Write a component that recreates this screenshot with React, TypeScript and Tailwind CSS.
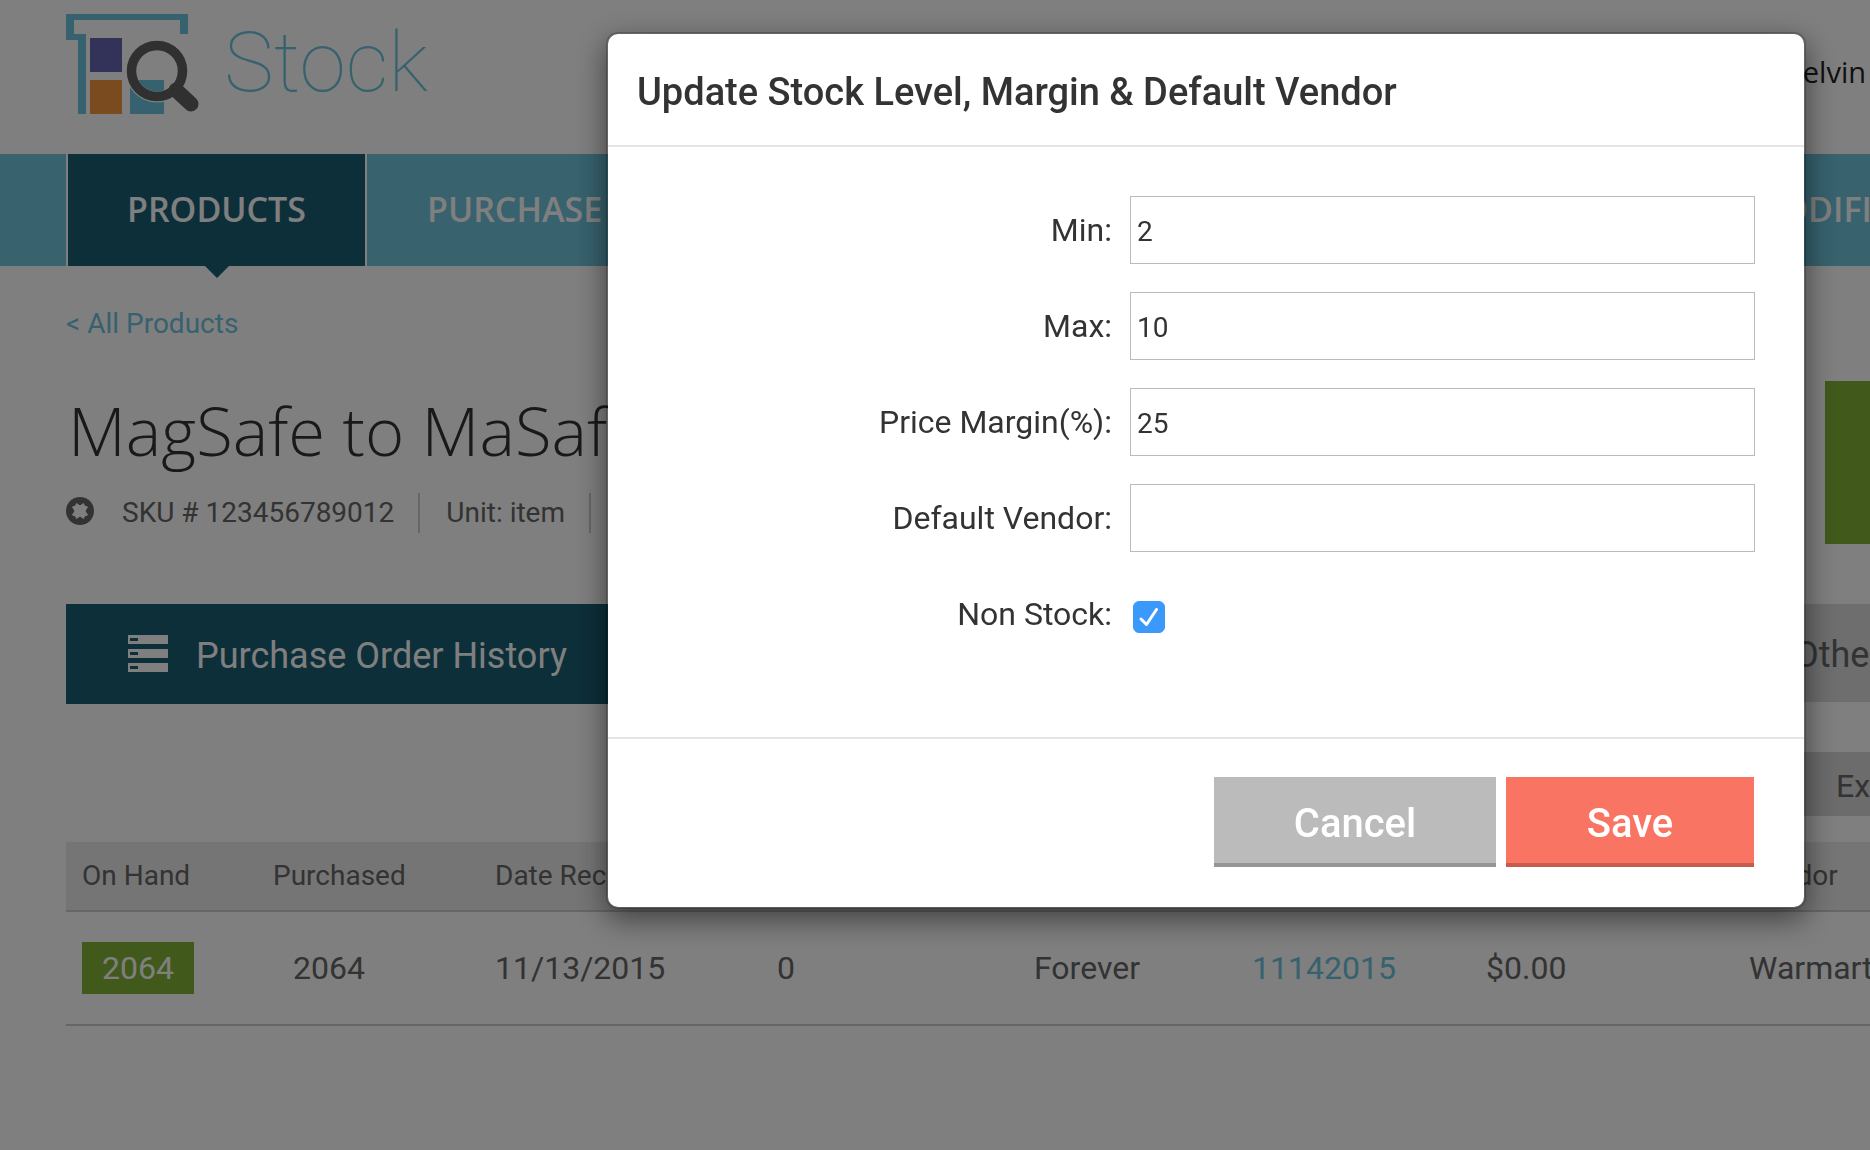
import type { ReactNode } from "react";

function Logo() {
  return (
    <svg width="134" height="104" viewBox="66 12 134 104" aria-hidden="true">
      <path d="M66 14H188V34H180V20H74V34H86V114H78V40H66Z" fill="#6dc3dc" />
      <rect x="90" y="38" width="32" height="34" fill="#6666b4" />
      <rect x="90" y="80" width="32" height="34" fill="#f5963c" />
      <rect x="130" y="80" width="34" height="34" fill="#6dc3dc" />
      <circle cx="157" cy="71" r="26" fill="none" stroke="#fff" strokeWidth="11" />
      <path d="M141 80H164V88Q158 91 151 88Q145 86 141 80Z" fill="#6dc3dc" />
      <path d="M176 90L191 104" stroke="#606060" strokeWidth="15" strokeLinecap="round" />
      <circle cx="157" cy="71" r="25.5" fill="none" stroke="#606060" strokeWidth="9.5" />
    </svg>
  );
}

function StatusIcon() {
  return (
    <svg width="28" height="28" viewBox="0 0 28 28" aria-hidden="true" className="mb-1 shrink-0">
      <circle cx="14" cy="14" r="14" fill="#666" />
      <path
        d="M10.500 6.500L14 9L17.500 6.500L18.500 9L21.500 10L19 14L21.500 18L18.500 19L17.500 21.500L14 19L10.500 21.500L9.500 19L6.500 18L9 14L6.500 10L9.500 9Z"
        fill="#fff"
        stroke="#fff"
        strokeWidth="1"
        strokeLinejoin="round"
      />
    </svg>
  );
}

function ListIcon() {
  return (
    <svg width="40" height="38" viewBox="0 0 40 38" aria-hidden="true" className="mb-1 shrink-0">
      {[0, 14, 28].map((y) => (
        <g key={y}>
          <rect x="0" y={y} width="40" height="9" fill="#fff" />
          <rect x="2" y={y + 3} width="8" height="3" fill="#1a5e72" />
        </g>
      ))}
    </svg>
  );
}

function Field({ id, label, value }: { id: string; label: string; value: string }) {
  return (
    <Row id={id} label={label}>
      <input
        id={id}
        type="text"
        defaultValue={value}
        className="h-[68px] w-full border border-[#bbb] bg-white px-[6px] pt-[2px] text-[28px] text-[#333] outline-none"
      />
    </Row>
  );
}

function Row({ id, label, children }: { id: string; label: string; children: ReactNode }) {
  return (
    <div className="grid h-[68px] grid-cols-[504px_1fr] items-center gap-[18px]">
      <label htmlFor={id} className="text-right text-[32px] leading-10">
        {label}
      </label>
      {children}
    </div>
  );
}

function Modal() {
  return (
    <div className="fixed inset-0 flex items-start bg-black/50 pt-8 pr-16 pl-[606px]">
      <form
        role="dialog"
        aria-labelledby="dialog-title"
        className="flex-1 rounded-xl border-2 border-black/20 bg-white bg-clip-padding shadow-[0_10px_30px_rgba(0,0,0,0.5)]"
        onSubmit={(e) => e.preventDefault()}
      >
        <h2 id="dialog-title" className="border-b-2 border-[#e5e5e5] px-[29px] pt-[33px] pb-7 text-[38px] leading-[50px] font-medium">
          Update Stock Level, Margin &amp; Default Vendor
        </h2>
        <div className="flex flex-col gap-7 border-b-2 border-[#e5e5e5] pt-[49px] pr-[49px] pb-[89px]">
          <Field id="min" label="Min:" value="2" />
          <Field id="max" label="Max:" value="10" />
          <Field id="margin" label="Price Margin(%):" value="25" />
          <Field id="vendor" label="Default Vendor:" value="" />
          <Row id="non-stock" label="Non Stock:">
            <span className="relative mt-[6px] ml-[3px] size-8">
              <input
                id="non-stock"
                type="checkbox"
                defaultChecked
                className="peer block size-8 appearance-none rounded-md border border-[#bbb] checked:border-[#3b99fc] checked:bg-[#3b99fc]"
              />
              <svg
                viewBox="0 0 32 32"
                aria-hidden="true"
                className="pointer-events-none absolute inset-0 hidden size-8 peer-checked:block"
              >
                <path d="M8 18L13.5 23.500L23.500 8.500" fill="none" stroke="#fff" strokeWidth="3" strokeLinecap="round" strokeLinejoin="round" />
              </svg>
            </span>
          </Row>
        </div>
        <div className="flex justify-end gap-[10px] pt-[38px] pr-[50px] pb-10 text-[40px] font-medium text-white">
          <button type="button" className="h-[90px] w-[282px] border-b-4 border-[#969696] bg-[#bbb] pt-2">
            Cancel
          </button>
          <button type="submit" className="h-[90px] w-[248px] border-b-4 border-[#c65c4e] bg-[#f97462] pt-2">
            Save
          </button>
        </div>
      </form>
    </div>
  );
}

export default function App() {
  return (
    <div className="min-h-screen overflow-hidden bg-white font-[Roboto,sans-serif] text-[#333]">
      <header className="flex h-[154px] items-start justify-between pl-[66px]">
        <div className="flex pt-3">
          <Logo />
          <span className="ml-6 text-[84px] leading-[102px] font-thin text-[#6dc3dc]">Stock</span>
        </div>
        <span className="pt-[52px] pr-1 font-['Open_Sans',sans-serif] text-[29px] leading-10 text-[#222]">Kelvin</span>
      </header>

      <nav className="flex h-28 bg-[#6ec4dc] pl-[66px] font-['Open_Sans',sans-serif] text-[34px] font-semibold text-white">
        <a href="#products" className="relative flex w-[301px] items-center justify-center border-x-2 border-white bg-[#1a5e72] pb-[2px]">
          PRODUCTS
          <svg width="24" height="12" viewBox="0 0 24 12" aria-hidden="true" className="absolute top-full left-1/2 -translate-x-1/2">
            <path d="M0 0H24L12 12Z" fill="#1a5e72" />
          </svg>
        </a>
        <a href="#purchase" className="flex items-center pb-[2px] pl-[60px]">
          PURCHASE
        </a>
        <a href="#modifiers" className="ml-auto flex w-[120px] items-center overflow-hidden pb-[2px]">
          MODIFIERS
        </a>
      </nav>

      <main className="pl-[66px]">
        <a href="#all" className="mt-[38px] block w-fit text-[28px] leading-10 text-[#6dc3dc]">
          &lt; All Products
        </a>
        <div className="mt-[37px] flex h-[163px] justify-between">
          <div className="flex flex-col">
            <h1 className="pt-1 pl-[2px] font-['Open_Sans',sans-serif] text-[67px] leading-[90px] font-light whitespace-nowrap">
              MagSafe to MaSafe
            </h1>
            <div className="mt-[18px] flex h-10 items-center text-[28px] text-[#666]">
              <StatusIcon />
              <span className="ml-7">SKU # 123456789012</span>
              <span className="ml-6 h-10 border-l-2 border-[#ccc]" />
              <span className="ml-[26px]">Unit: item</span>
              <span className="ml-6 h-10 border-l-2 border-[#ccc]" />
            </div>
          </div>
          <button type="button" aria-label="Add" className="w-[45px] bg-[#83b337]" />
        </div>

        <div className="mt-[60px] flex h-[100px] items-start justify-between text-[36px]">
          <button type="button" className="flex h-[100px] w-[560px] items-center bg-[#1a5e72] pt-1 pl-[62px] text-white">
            <ListIcon />
            <span className="ml-7">Purchase Order History</span>
          </button>
          <button type="button" className="h-[98px] w-[120px] overflow-hidden bg-[#dcdcdc] pt-1 pl-[44px] text-left text-[#666]">
            Other
          </button>
        </div>

        <div className="mt-12 flex justify-end">
          <button type="button" className="h-16 w-[120px] overflow-hidden bg-[#d8d8d8] pt-1 pl-[86px] text-left text-[32px] text-[#666]">
            Export
          </button>
        </div>

        <div className="mt-[26px] overflow-hidden">
          <table className="w-full table-fixed text-left text-[#666]">
            <colgroup>
              <col className="w-[191px]" />
              <col className="w-[222px]" />
              <col className="w-[282px]" />
              <col className="w-[257px]" />
              <col className="w-[218px]" />
              <col className="w-[234px]" />
              <col className="w-[263px]" />
              <col />
            </colgroup>
            <thead>
              <tr className="h-[69px] border-b-2 border-[#ccc] bg-[#ebebeb] text-[28px] whitespace-nowrap">
                <th className="pl-4 font-normal">On Hand</th>
                <th className="pl-4 font-normal">Purchased</th>
                <th className="pl-4 font-normal">Date Rec</th>
                <th />
                <th />
                <th />
                <th />
                <th className="pl-4 font-normal">Vendor</th>
              </tr>
            </thead>
            <tbody>
              <tr className="h-[114px] border-b-2 border-[#ccc] text-[32px] whitespace-nowrap">
                <td className="pl-4">
                  <span className="flex h-[52px] w-28 items-center justify-center bg-[#83b337] text-white">2064</span>
                </td>
                <td className="pl-9">2064</td>
                <td className="pl-4">11/13/2015</td>
                <td className="pl-4">0</td>
                <td className="pl-4">Forever</td>
                <td className="pl-4">
                  <a href="#po" className="text-[#6dc3dc]">11142015</a>
                </td>
                <td className="pl-4">$0.00</td>
                <td className="pl-4">Warmart</td>
              </tr>
            </tbody>
          </table>
        </div>
      </main>
      <Modal />
    </div>
  );
}
